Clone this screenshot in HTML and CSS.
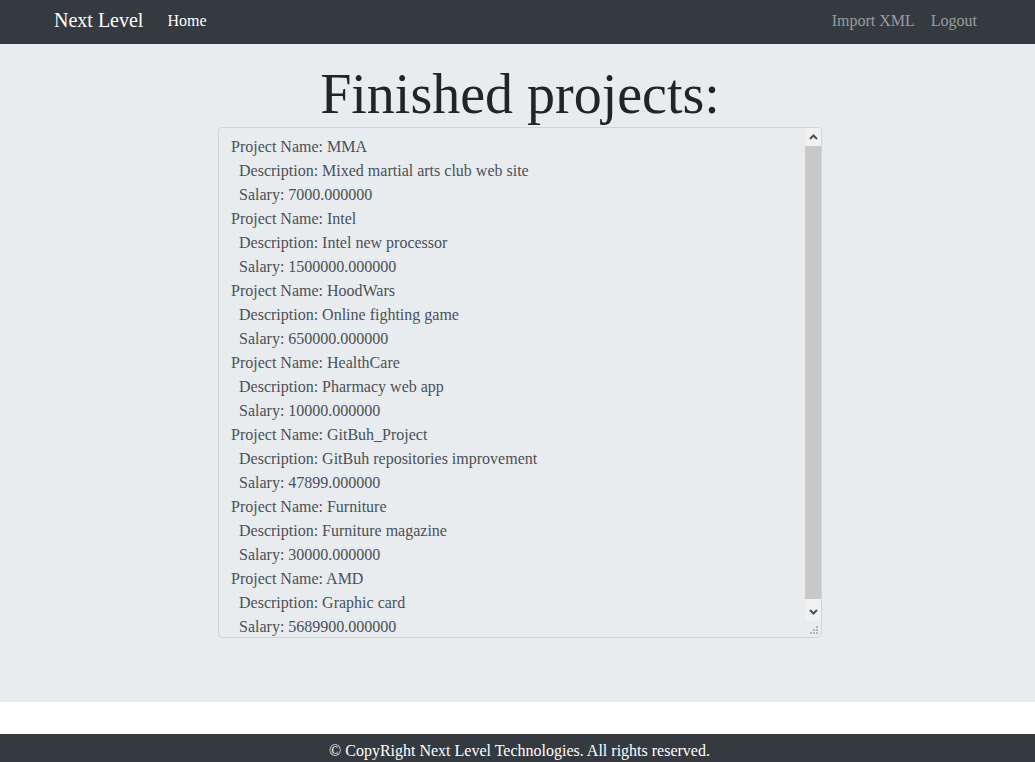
FILE: index.html
```html
<!DOCTYPE html>
<html lang="en">
<head>
<meta charset="utf-8">
<title>Finished projects</title>
<link rel="stylesheet" href="styles.css">
</head>
<body>
<nav class="navbar">
  <div class="nav-left">
    <a class="brand" href="#">Next Level</a>
    <a class="nav-link active" href="#">Home</a>
  </div>
  <div class="nav-right">
    <a class="nav-link" href="#">Import XML</a>
    <a class="nav-link" href="#">Logout</a>
  </div>
</nav>
<main class="main">
  <h1 class="title">Finished projects:</h1>
  <div class="projects">
    <div class="projects-text">Project Name: MMA
  Description: Mixed martial arts club web site
  Salary: 7000.000000
Project Name: Intel
  Description: Intel new processor
  Salary: 1500000.000000
Project Name: HoodWars
  Description: Online fighting game
  Salary: 650000.000000
Project Name: HealthCare
  Description: Pharmacy web app
  Salary: 10000.000000
Project Name: GitBuh_Project
  Description: GitBuh repositories improvement
  Salary: 47899.000000
Project Name: Furniture
  Description: Furniture magazine
  Salary: 30000.000000
Project Name: AMD
  Description: Graphic card
  Salary: 5689900.000000</div>
    <div class="scroll-col">
      <div class="scrollbar">
        <div class="sb-btn">
          <svg width="9" height="6" viewBox="0 0 9 6"><path d="M1 5 L4.5 1.5 L8 5" fill="none" stroke="#505050" stroke-width="2"/></svg>
        </div>
        <div class="sb-track"><div class="sb-thumb"></div></div>
        <div class="sb-btn">
          <svg width="9" height="6" viewBox="0 0 9 6"><path d="M1 1 L4.5 4.5 L8 1" fill="none" stroke="#505050" stroke-width="2"/></svg>
        </div>
      </div>
      <div class="resizer">
        <svg width="8" height="8" viewBox="0 0 8 8"><g fill="#b4b4b4"><rect x="6" y="0" width="2" height="2"/><rect x="3" y="3" width="2" height="2"/><rect x="6" y="3" width="2" height="2"/><rect x="0" y="6" width="2" height="2"/><rect x="3" y="6" width="2" height="2"/><rect x="6" y="6" width="2" height="2"/></g></svg>
      </div>
    </div>
  </div>
</main>
<div class="spacer"></div>
<footer class="footer">© CopyRight Next Level Technologies. All rights reserved.</footer>
</body>
</html>
```
FILE: styles.css
```css
html, body {
  margin: 0;
  padding: 0;
  height: 100%;
}
body {
  display: flex;
  flex-direction: column;
  font-family: "Liberation Serif", "Times New Roman", serif;
  font-size: 16px;
  color: #212529;
  background: #fff;
  overflow: hidden;
}
.navbar {
  height: 44px;
  flex: 0 0 44px;
  background: #343a40;
  display: flex;
  align-items: center;
  justify-content: space-between;
  padding: 0 50px 4px 54px;
  box-sizing: border-box;
}
.nav-left, .nav-right {
  display: flex;
  align-items: center;
}
.brand {
  color: #fff;
  font-size: 20px;
  text-decoration: none;
  margin-right: 16px;
  line-height: 30px;
}
.nav-link {
  color: rgba(255, 255, 255, 0.5);
  text-decoration: none;
  padding: 0 8px;
  line-height: 24px;
  margin-top: 1px;
}
.nav-link.active {
  color: #fff;
}
.main {
  flex: 0 0 658px;
  background: #e9ecef;
  display: flex;
  flex-direction: column;
  align-items: center;
  padding: 17px 0 0 5px;
  box-sizing: border-box;
}
.title {
  margin: 0;
  font-size: 56px;
  font-weight: 400;
  line-height: 66px;
  color: #212529;
}
.projects {
  width: 604px;
  height: 511px;
  box-sizing: border-box;
  display: flex;
  background: #e9ecef;
  border: 1px solid #ced4da;
  border-radius: 4px;
  overflow: hidden;
}
.projects-text {
  flex: 1 1 auto;
  padding: 7px 12px 0;
  white-space: pre;
  font-size: 16px;
  line-height: 24px;
  color: #495057;
  overflow: hidden;
}
.scroll-col {
  flex: 0 0 16px;
  display: flex;
  flex-direction: column;
}
.scrollbar {
  flex: 1 1 auto;
  display: flex;
  flex-direction: column;
  background: #f1f1f1;
}
.sb-btn {
  flex: 0 0 18px;
  display: flex;
  align-items: center;
  justify-content: center;
  background: #f1f1f1;
}
.sb-track {
  flex: 1 1 auto;
  display: flex;
  flex-direction: column;
  padding-bottom: 4px;
}
.sb-thumb {
  flex: 1 1 auto;
  background: #c8c8c8;
}
.resizer {
  flex: 0 0 16px;
  display: flex;
  align-items: flex-end;
  justify-content: flex-end;
  padding: 0 3px 3px 0;
  box-sizing: border-box;
}
.resizer svg {
  display: block;
}
.spacer {
  flex: 1 1 auto;
}
.footer {
  flex: 0 0 28px;
  box-sizing: border-box;
  background: #343a40;
  color: #fff;
  text-align: center;
  padding-top: 5px;
  line-height: 23px;
  font-size: 16px;
  padding-left: 4px;
}
```
